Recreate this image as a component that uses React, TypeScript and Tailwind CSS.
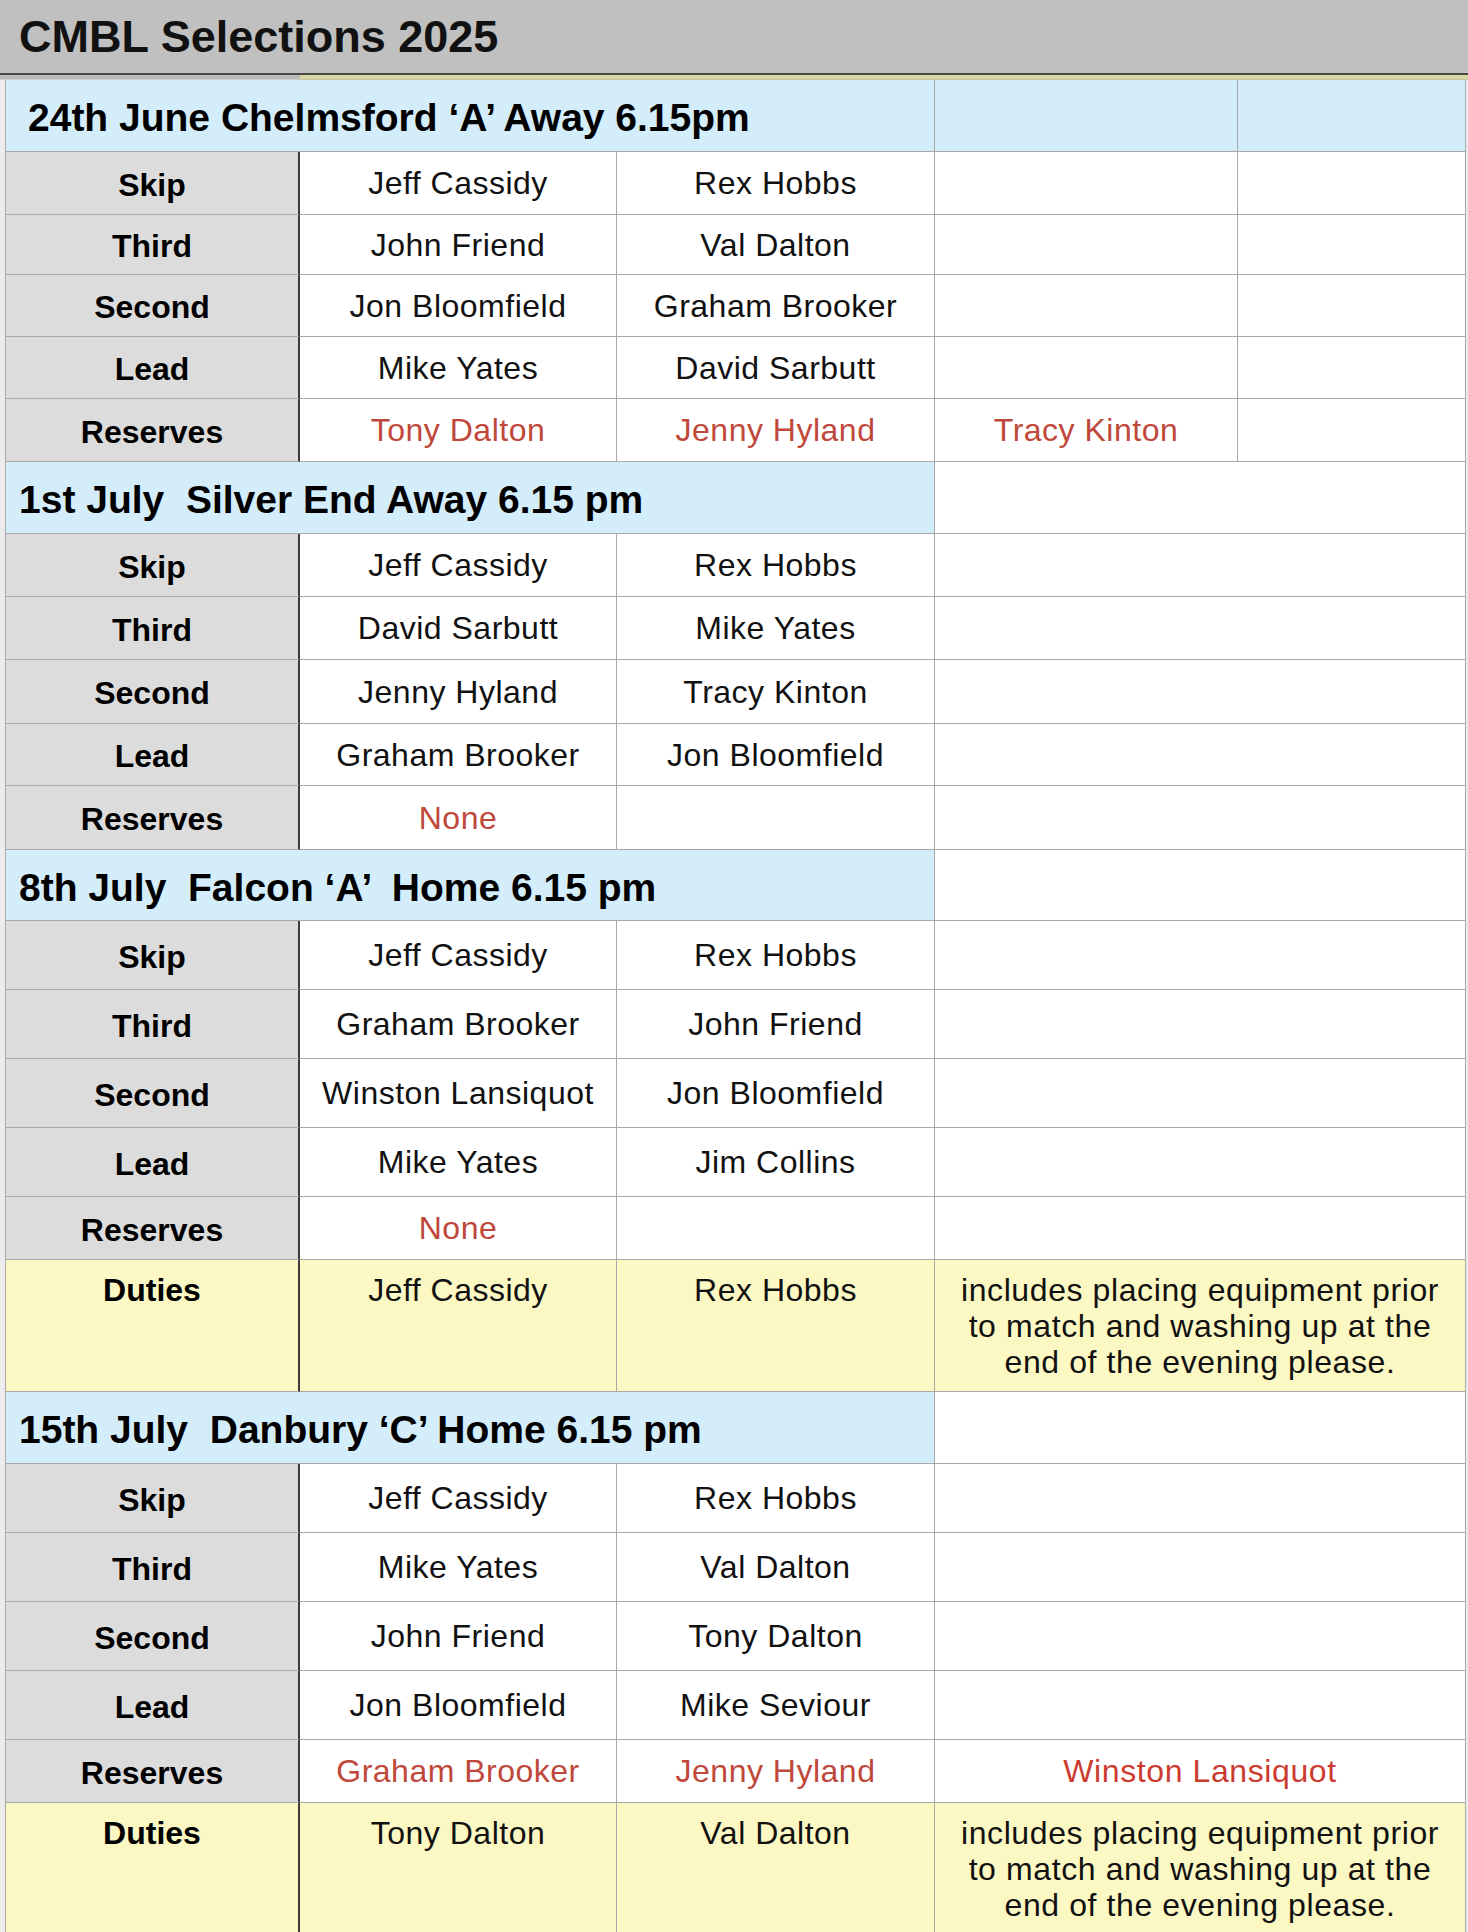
import React, { JSX } from 'react';

type Row = {
  label: string;
  cells: string[];
  extra?: string;
  h: string;
  red?: boolean;
  extraRed?: boolean;
  duties?: boolean;
  last?: boolean;
};

type Section = {
  title: string;
  pad: string;
  headH: string;
  split: boolean;
  rows: Row[];
};

const COLS = 'grid grid-cols-[294px_317px_318px_303px_228px]';
const LINE = 'border-[#a9a9a9]';

const sections: Section[] = [
  {
    title: '24th June Chelmsford ‘A’ Away 6.15pm',
    pad: 'pl-[22px]',
    headH: 'h-[72px]',
    split: true,
    rows: [
      { label: 'Skip', cells: ['Jeff Cassidy', 'Rex Hobbs'], h: 'h-[63px]' },
      { label: 'Third', cells: ['John Friend', 'Val Dalton'], h: 'h-[60px]' },
      { label: 'Second', cells: ['Jon Bloomfield', 'Graham Brooker'], h: 'h-[62px]' },
      { label: 'Lead', cells: ['Mike Yates', 'David Sarbutt'], h: 'h-[62px]' },
      { label: 'Reserves', cells: ['Tony Dalton', 'Jenny Hyland'], extra: 'Tracy Kinton', h: 'h-[63px]', red: true },
    ],
  },
  {
    title: '1st July  Silver End Away 6.15 pm',
    pad: 'pl-[13px]',
    headH: 'h-[72px]',
    split: false,
    rows: [
      { label: 'Skip', cells: ['Jeff Cassidy', 'Rex Hobbs'], h: 'h-[63px]' },
      { label: 'Third', cells: ['David Sarbutt', 'Mike Yates'], h: 'h-[63px]' },
      { label: 'Second', cells: ['Jenny Hyland', 'Tracy Kinton'], h: 'h-[64px]' },
      { label: 'Lead', cells: ['Graham Brooker', 'Jon Bloomfield'], h: 'h-[62px]' },
      { label: 'Reserves', cells: ['None', ''], h: 'h-[64px]', red: true },
    ],
  },
  {
    title: '8th July  Falcon ‘A’  Home 6.15 pm',
    pad: 'pl-[13px]',
    headH: 'h-[71px]',
    split: false,
    rows: [
      { label: 'Skip', cells: ['Jeff Cassidy', 'Rex Hobbs'], h: 'h-[69px]' },
      { label: 'Third', cells: ['Graham Brooker', 'John Friend'], h: 'h-[69px]' },
      { label: 'Second', cells: ['Winston Lansiquot', 'Jon Bloomfield'], h: 'h-[69px]' },
      { label: 'Lead', cells: ['Mike Yates', 'Jim Collins'], h: 'h-[69px]' },
      { label: 'Reserves', cells: ['None', ''], h: 'h-[63px]', red: true },
      { label: 'Duties', cells: ['Jeff Cassidy', 'Rex Hobbs'], h: 'h-[132px]', duties: true },
    ],
  },
  {
    title: '15th July  Danbury ‘C’ Home 6.15 pm',
    pad: 'pl-[13px]',
    headH: 'h-[72px]',
    split: false,
    rows: [
      { label: 'Skip', cells: ['Jeff Cassidy', 'Rex Hobbs'], h: 'h-[69px]' },
      { label: 'Third', cells: ['Mike Yates', 'Val Dalton'], h: 'h-[69px]' },
      { label: 'Second', cells: ['John Friend', 'Tony Dalton'], h: 'h-[69px]' },
      { label: 'Lead', cells: ['Jon Bloomfield', 'Mike Seviour'], h: 'h-[69px]' },
      { label: 'Reserves', cells: ['Graham Brooker', 'Jenny Hyland'], extra: 'Winston Lansiquot', h: 'h-[63px]', red: true, extraRed: true },
      { label: 'Duties', cells: ['Tony Dalton', 'Val Dalton'], h: 'h-[129px]', duties: true, last: true },
    ],
  },
];

function DutiesNote(): JSX.Element {
  return (
    <span>
      includes placing equipment prior
      <br />
      to match and washing up at the
      <br />
      end of the evening please.
    </span>
  );
}

function TableRow({ row, split }: { row: Row; split: boolean }): JSX.Element {
  const bottom = row.last ? '' : `border-b ${LINE}`;
  const align = row.duties ? 'items-start pt-[12px]' : 'items-center';
  const bg = row.duties ? 'bg-[#fcf8c3]' : 'bg-white';
  const nameColor = row.red ? 'text-[#c0483b]' : 'text-[#111111]';
  const cell = `flex justify-center ${align} ${bottom} border-r ${LINE} ${bg}`;

  return (
    <div className={`${COLS} ${row.h}`}>
      <div
        className={`flex justify-center ${align} ${bottom} ${row.duties ? 'bg-[#fcf8c3]' : 'bg-[#dcdcdc] pt-[3px]'} border-r-2 border-r-[#3d3d3d] font-bold text-[32px] leading-[36px] text-black`}
      >
        {row.label}
      </div>
      {row.cells.map((name, i) => (
        <div key={i} className={`${cell} ${nameColor} text-[32px] leading-[36px] tracking-[0.5px]`}>
          {name}
        </div>
      ))}
      {split ? (
        <>
          <div className={`${cell} text-[#c0483b] text-[32px] leading-[36px] tracking-[0.5px]`}>{row.extra ?? ''}</div>
          <div className={cell} />
        </>
      ) : (
        <div
          className={`col-span-2 ${cell} text-center text-[32px] leading-[36px] tracking-[0.6px] ${row.extraRed ? 'text-[#cc3b2f]' : 'text-[#111111]'}`}
        >
          {row.duties ? <DutiesNote /> : row.extra ?? ''}
        </div>
      )}
    </div>
  );
}

function SectionBlock({ section }: { section: Section }): JSX.Element {
  return (
    <div>
      <div className={`${COLS} ${section.headH}`}>
        <div
          className={`col-span-3 flex items-center pt-[6px] ${section.pad} bg-[#d3edfb] border-b border-r ${LINE} font-bold text-[39px] whitespace-pre text-black`}
        >
          {section.title}
        </div>
        {section.split ? (
          <>
            <div className={`bg-[#d3edfb] border-b border-r ${LINE}`} />
            <div className={`bg-[#d3edfb] border-b border-r ${LINE}`} />
          </>
        ) : (
          <div className={`col-span-2 bg-white border-b border-r ${LINE}`} />
        )}
      </div>
      {section.rows.map((row) => (
        <TableRow key={row.label} row={row} split={section.split} />
      ))}
    </div>
  );
}

export default function App(): JSX.Element {
  return (
    <div className="w-[1468px] h-[1932px] overflow-hidden bg-[#ececec] font-['Liberation_Sans',Arial,sans-serif]">
      {/* Sheet title */}
      <div className="h-[75px] flex items-center pl-[19px] bg-[#bfc0bf] border-b-2 border-[#484848]">
        <h1 className="font-bold text-[45px] text-[#111111]">CMBL Selections 2025</h1>
      </div>
      <div className="flex h-[5px]">
        <div className="w-[300px] bg-[#b9b9b9] border-b border-[#d0d0d0]" />
        <div className="flex-1 bg-[#d9d6a7] border-b border-[#c9c6a0]" />
      </div>

      {/* Selections table */}
      <div className="ml-[5px] mr-[2px] border-l border-[#a9a9a9]">
        {sections.map((section) => (
          <SectionBlock key={section.title} section={section} />
        ))}
      </div>
    </div>
  );
}
